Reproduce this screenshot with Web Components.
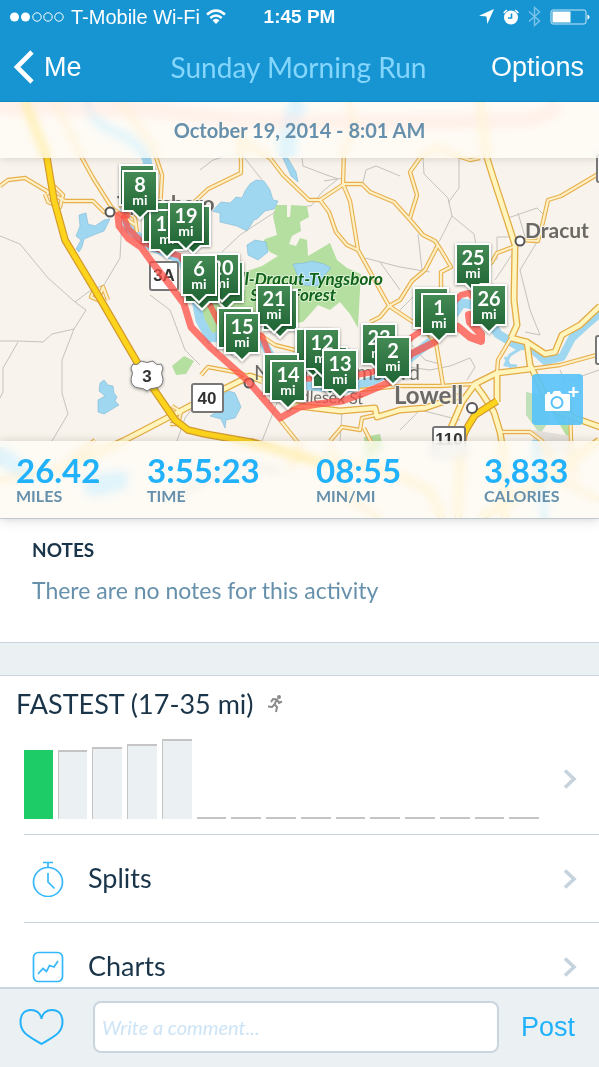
<!DOCTYPE html>
<html lang="en">
<head>
<meta charset="utf-8">
<meta name="viewport" content="width=device-width, initial-scale=1">
<title>Sunday Morning Run</title>
<style>
  html, body { height: 100%; margin: 0; }
  body {
    --brand: #1795d3;
    --accent: #21b2fb;
    --ink: #1a3549;
    --muted: #6690ab;
    --line: #c9d6df;
    --panel: #ebf0f3;
    --system: "Liberation Sans", Arial, sans-serif;
    font-family: Lato, "Open Sans", sans-serif;
    color: var(--ink);
    background: #fff;
  }
</style>
</head>
<body>
<activity-screen>
  <status-bar slot="top"></status-bar>
  <nav-bar slot="top">
    <span slot="back">Me</span>
    <span slot="title">Sunday Morning Run</span>
    <span slot="action">Options</span>
  </nav-bar>
  <run-map>
    <span slot="date">October 19, 2014 - 8:01 AM</span>
    <stat-item slot="stats"><span slot="value">26.42</span>MILES</stat-item>
    <stat-item slot="stats"><span slot="value">3:55:23</span>TIME</stat-item>
    <stat-item slot="stats"><span slot="value">08:55</span>MIN/MI</stat-item>
    <stat-item slot="stats"><span slot="value">3,833</span>CALORIES</stat-item>
  </run-map>
  <note-block><span slot="heading">NOTES</span>There are no notes for this activity</note-block>
  <fastest-chart values="69,69,72,75,80,0,0,0,0,0,0,0,0,0,0">FASTEST (17-35 mi)</fastest-chart>
  <menu-row icon="watch">Splits</menu-row>
  <menu-row icon="chart">Charts</menu-row>
  <comment-bar slot="bottom"></comment-bar>
</activity-screen>

<script>
const define = (name, html, setup) => {
  const template = document.createElement('template');
  template.innerHTML = html;
  customElements.define(name, class extends HTMLElement {
    constructor() {
      super();
      this.attachShadow({ mode: 'open' }).append(template.content.cloneNode(true));
    }
    connectedCallback() { if (setup) setup(this, this.shadowRoot); }
  });
};

const chevron = '<svg class="chev" width="14" height="20" viewBox="0 0 14 20" aria-hidden="true"><path d="M2 1.500 11 10 2 18.500" fill="none" stroke="#c6d2dc" stroke-width="3.600"/></svg>';

define('activity-screen', `
<style>
  :host { display: flex; flex-direction: column; height: 100vh; overflow: hidden; }
  header { background: var(--brand); border-bottom: 1px solid #1486c0; }
  main { flex: 1; min-height: 0; overflow-y: auto; scrollbar-width: none; }
</style>
<header><slot name="top"></slot></header>
<main><slot></slot></main>
<slot name="bottom"></slot>`);

define('status-bar', `
<style>
  :host { display: grid; grid-template-columns: 1fr auto 1fr; align-items: center; height: 33px;
    padding: 0 9px; color: #fff; font: 20px/24px var(--system); }
  div { display: flex; align-items: center; gap: 6px; }
  .icons { justify-content: flex-end; gap: 9px; }
  time { font-size: 19px; font-weight: 700; }
  svg { display: block; }
</style>
<div>
  <svg width="56" height="12" viewBox="0 0 56 12" fill="none" stroke="#fff"><circle cx="5.500" cy="6" r="4.500" fill="#fff" stroke="none"/><circle cx="16.500" cy="6" r="4.500" fill="#fff" stroke="none"/><circle cx="28" cy="6" r="4.200"/><circle cx="39" cy="6" r="4.200"/><circle cx="50" cy="6" r="4.200"/></svg>
  <span>T-Mobile Wi-Fi</span>
  <svg width="20" height="16" viewBox="0 0 20 16" fill="none" stroke="#fff" stroke-width="2.400"><path d="M1 5.500Q10-2.500 19 5.500M4.300 9Q10 4 15.700 9"/><path d="M6.500 11.300Q10 8.300 13.500 11.300L10 15Z" fill="#fff" stroke="none"/></svg>
</div>
<time datetime="13:45">1:45 PM</time>
<div class="icons">
  <svg width="15" height="15" viewBox="0 0 15 15" fill="#fff"><path d="M15 0 8.300 15 7.500 7.500 0 6.700Z"/></svg>
  <svg width="16" height="16" viewBox="0 0 16 16"><circle cx="8" cy="8.500" r="7" fill="#fff"/><path d="M8.500 4.500v4.500H5" fill="none" stroke="#1795d3" stroke-width="1.600"/><path d="M.700 4 3.800 1M15.300 4 12.200 1" stroke="#fff" stroke-width="1.600"/></svg>
  <svg width="13" height="21" viewBox="0 0 13 21" fill="none" stroke="#7dc3e8" stroke-width="1.400"><path d="M1 5.500 11.500 15 6.500 19.500V1.500L11.500 6 1 15.500"/></svg>
  <svg width="40" height="16" viewBox="0 0 40 16"><rect x="1" y="1" width="35" height="14" rx="2" fill="none" stroke="#cbe6f5"/><path d="M2.500 2.500h18v11h-18z" fill="#fff"/><path d="M37.500 5.500q2 .500 2 2.500t-2 2.500z" fill="#fff"/></svg>
</div>`);

define('nav-bar', `
<style>
  :host { display: grid; grid-template-columns: 1fr auto 1fr; align-items: center; height: 68px; padding: 0 15px 0 13px; }
  a, button { font: 27px/32px var(--system); color: #fff; text-decoration: none; background: none; border: 0; padding: 0; }
  a { display: flex; align-items: center; gap: 9px; }
  button { justify-self: end; }
  h1 { margin: 0; font-size: 28px; line-height: 32px; font-weight: 400; color: #84d6fd; }
</style>
<a href="#me"><svg width="22" height="34" viewBox="0 0 22 34" aria-hidden="true"><path d="M19 2 4 17 19 32" fill="none" stroke="#fff" stroke-width="4.600"/></svg><slot name="back"></slot></a>
<h1><slot name="title"></slot></h1>
<button type="button"><slot name="action"></slot></button>`);

define('stat-item', `
<style>
  :host { display: block; font-size: 16px; line-height: 18px; font-weight: 700; color: var(--muted); }
  b { display: block; font-size: 33px; line-height: 34px; font-weight: 700; color: var(--accent); }
</style>
<b><slot name="value"></slot></b><slot></slot>`);

/* Road polylines, drawn twice: casing first, then the lighter surface. */
const smallRoads = [
  '0,186 8,180 25,178 50,193 65,201 93,201 104,212 115,213', '55,102 82,158 93,178 112,208 135,225',
  '120,102 152,145 162,175 160,210', '241,130 241,173 208,189 190,206', '240,140 270,158 283,175 309,200 320,200 329,212 336,232 347,245 358,250',
  '320,200 344,184 362,184 370,192 394,202 412,222 423,235 435,241 441,250 451,267 441,272 441,290', '349,102 354,130 344,150 343,184 350,201 358,250 389,306 425,330 436,343 443,385',
  '440,145 420,158 410,172 417,195 410,218', '438,245 425,270 412,281 400,300 389,306', '420,156 440,148 455,155 470,160 480,158',
  '513,247 497,253 492,262 480,270', '520,240 538,241 543,222 548,200 561,196 600,173', '511,338 498,360 497,373',
  '497,373 530,369 560,365 600,354', '475,384 440,386 400,386 360,390', '500,432 530,432 542,441 560,480 599,500',
  '201,375 208,367 240,373 262,382', '280,420 300,445 290,470', '330,441 342,427 360,430 362,418 376,415', '370,322 380,317 389,306',
  '260,335 275,345 295,350', '375,450 364,428', '570,400 571,440 575,480', '95,287 91,297 98,300 103,287 108,300',
  '47,194 55,187 63,195 60,207 48,202 45,194', '172,406 181,412 178,424 170,424', '120,205 135,218 137,232', '330,445 350,500 380,518', '0,480 60,470 95,440'
];
const bigRoads = [
  '480,102 487,158 493,177 507,220 515,245 514,300 517,325 511,338', '511,338 527,342 545,354 555,352 562,335 580,325 600,306',
  '527,342 530,365 545,395 557,411 575,418 600,427', '530,369 497,373 475,384 462,402 450,430', '475,384 483,395 494,412 500,432 503,450 505,518',
  '497,373 497,402', '290,405 340,411 375,408 377,417 400,410 425,408 460,396', '60,470 123,441 150,427 192,405 250,376 262,380',
  '250,441 320,462 380,468 430,490 442,518', '465,430 460,460 458,518', '480,518 560,470 599,440'
];
const lanes = [
  '0,236 20,244 48,278 75,302 86,310 74,329 62,360 62,393 68,414 52,441', '0,341 18,341 43,342 52,334 74,329', '0,398 3,392 3,368 18,342',
  '75,302 91,290 104,285 120,258 122,216', '200,170 213,160 240,152 262,180', '302,158 303,166 324,174 338,179 323,191 311,206 307,206',
  '275,212 240,235 222,252', '324,181 343,178', '363,182 366,170 376,166 400,176', '423,158 424,174 448,198 452,216 440,240 434,248', '459,158 459,188 448,203',
  '452,216 474,234 477,250', '365,258 400,267 430,272', '380,262 400,290', '508,218 537,208 544,215', '518,213 526,240', '537,242 520,270 530,310', '519,237 497,237 497,260',
  '495,280 515,250', '400,310 420,290', '418,234 422,270', '530,310 540,335 525,332', '400,366 430,370 450,366 470,358 475,367 467,380', '412,345 425,360 440,364',
  '400,430 420,410 460,420', '560,370 565,382 599,370', '177,441 185,418 195,405', '262,441 271,418 278,400', '340,441 342,412', '150,295 170,310 185,350 200,365', '215,490 280,463 300,480'
];
const freeways = ['25,102 47,158 54,200 65,240 95,290 137,362 153,388 175,420 188,430 205,434 250,442 320,462', '497,401 475,415 467,428 458,445'];
const lines = (list, style) => `<g fill="none" stroke-linejoin="round" ${style}>${list.map(p => `<polyline points="${p}"/>`).join('')}</g>`;

/* Mile markers: centre x, top y, label (stacked markers behind carry none). */
const markers = [
  [137,164,''],[160,201,''],[193,205,''],[167,209,'17'],[140,170,'8'],[186,201,'19'],
  [226,261,''],[222,253,'20'],[202,261,''],[199,254,'6'],[280,289,''],[274,284,'21'],[235,307,''],[242,312,'15'],
  [330,346,''],[313,328,'2'],[322,328,'12'],[281,353,''],[288,360,'14'],[340,349,'13'],
  [379,323,'23'],[393,336,'2'],[473,243,'25'],[431,287,'2'],[489,284,'26'],[439,293,'1']
];
const marker = ([x, y, label]) => `<g transform="translate(${x} ${y})">
  <path filter="url(#drop)" d="M-18 0H18V42H8L0 50-8 42H-18Z" fill="#fff"/><path d="M-16 2H16V40H7L0 47-7 40H-16Z" fill="url(#pin)"/>
  ${label && `<text y="22" font-size="20">${label}</text><text y="35" font-size="14">mi</text>`}</g>`;

const mapArt = `
<svg class="map" viewBox="0 102 599 416" preserveAspectRatio="xMidYMid slice" role="img" aria-label="Route map">
  <defs>
    <linearGradient id="pin" x1="0" y1="0" x2="0" y2="1"><stop stop-color="#448a54"/><stop offset="1" stop-color="#1f6434"/></linearGradient>
    <filter id="drop" x="-30%" y="-30%" width="160%" height="160%"><feDropShadow dx="0" dy="1" stdDeviation="1.500" flood-opacity=".4"/></filter>
  </defs>
  <path fill="#f8f3ec" d="M0 102H599V518H0Z"/>
  <path fill="#b5dfa0" d="M276 205H287V217H290L291 205 307 206 309 217 300 222 301 231 292 236 289 244 296 246 300 238 307 240 308 256 330 243 337 260 347 268 361 274 360 290 358 328 350 314 340 302 330 310 318 305 303 322 280 325 240 320 222 335 216 337 205 332 198 310 215 290 245 290 245 272 262 266 278 256 270 252 262 244 265 239 277 235 273 216Z"/>
  <path fill="#b5dfa0" d="M172 366 184 356 194 361 186 374 176 375ZM364 437 380 434 383 448 366 460ZM368 440 378 436 378 452 366 452ZM543 400 560 410 573 432 570 442 560 425Z"/>
  <path fill="#bfe0b9" d="M526 392 545 396 550 420 540 434 526 415Z"/><path fill="#e3dfda" d="M533 430 570 436V455H533Z"/>
  <g fill="#9fd7f1" stroke="#7fb8d6" stroke-width=".600">
    <path d="M79 215 86 213 88 224 95 226 104 220 110 219 104 231 96 234 84 239 82 247 79 252 76 249 81 240 76 236 80 226Z"/>
    <path d="M212 211 221 202 230 203 236 197 242 198 245 191 250 184 256 180 264 181 270 190 273 200 278 201 274 209 265 211 257 219 254 220 247 231 237 226 220 222 220 213Z"/>
    <path d="M283 150 296 172 298 182 291 176 283 158Z"/><path d="M247 245 255 240 266 242 268 252 258 260 248 255Z"/>
    <path d="M293 264 304 263 312 261 324 264 331 268 322 278 318 286 300 285 297 274Z"/>
    <path d="M100 383 104 380 108 385 113 386 114 393 117 397 115 401 119 405 104 414 98 412 98 400 105 396 99 391Z"/>
    <path d="M223 389 235 393 241 407 235 418 226 420 225 428 221 419 210 416 220 410Z"/>
    <path d="M0 447 12 452 35 475 28 482 0 465ZM85 478 110 472 128 472 126 488 98 496 85 493Z"/>
  </g>
  <g fill="none" stroke="#9fd7f1" stroke-linejoin="round">
    <path stroke-width="9" d="M85 102Q95 125 115 132 140 142 147 160L150 178Q140 195 124 210L128 228 148 245 182 260 194 290 200 320 212 342"/>
    <path stroke-width="9" d="M212 338 225 335M262 340 270 355 285 380 310 386 345 389 375 380 410 358 440 334 462 303 480 306 498 334 518 346 528 345"/>
    <path stroke-width="18" d="M300 102Q285 125 288 156"/><path stroke-width="8" d="M528 345 545 361 562 357 572 338 585 326 600 313"/>
    <path stroke-width="3" d="M528 344 510 355 505 365 517 366M505 357 511 368"/><path stroke-width="7" d="M535 440 545 518"/>
  </g>
  ${lines(lanes, 'stroke="#c5c3bd" stroke-width="1"')}
  <path d="M0 108Q130 106 200 116T520 120Q550 118 558 104" fill="none" stroke="#ffa193" stroke-width="15" opacity=".4"/>
  ${lines(smallRoads, 'stroke="#e8b04d" stroke-width="4.400"')}
  ${lines(bigRoads, 'stroke="#e3ab45" stroke-width="7"')}
  ${lines(smallRoads, 'stroke="#fdefc6" stroke-width="2.200"')}
  ${lines(bigRoads, 'stroke="#fff5bd" stroke-width="4.400"')}
  ${lines(freeways, 'stroke="#d39a2c" stroke-width="7.600"')}
  ${lines(freeways, 'stroke="#fdd41c" stroke-width="5.200"')}
  <path d="M180 495 205 480 245 463 280 473" fill="none" stroke="#cfc9c2" stroke-width="5"/>
  <g class="place"><text x="117" y="211" font-size="21">Tyngsboro</text><text x="525" y="238" font-size="21">Dracut</text><text x="394" y="404" font-size="24">Lowell</text></g>
  <g class="town"><text x="254" y="380" font-size="21">North Chelmsford</text><text transform="translate(273 401) rotate(2)" font-size="16">Middlesex St</text></g>
  <g class="park"><text x="383" y="285" text-anchor="end">Lowell-Dracut-Tyngsboro</text><text x="336" y="301" text-anchor="end">State Forest</text></g>
  <g fill="#fff" stroke="#777" stroke-width="2">
    <rect x="150" y="262" width="28" height="28" rx="2"/><rect x="192" y="384" width="31" height="28" rx="2"/><rect x="433" y="427" width="32" height="28" rx="2"/>
    <rect x="597" y="155" width="20" height="27" rx="2"/><rect x="596" y="336" width="20" height="28" rx="2"/>
    <path stroke-width="1" filter="url(#drop)" d="M133 364Q138 366 141 361 147 364 153 361 156 366 161 364L163 368Q160 373 163 379 163 387 155 388 150 388 147 391 144 388 139 388 131 387 131 379 134 373 131 368Z"/>
  </g>
  <g class="shield"><text x="164" y="281">3A</text><text x="207" y="404">40</text><text x="147" y="382" font-size="20">3</text><text x="449" y="445">110</text></g>
  <g fill="#fff" stroke="#555" stroke-width="2"><circle cx="110" cy="212" r="4.500"/><circle cx="520" cy="241" r="4.500"/><circle cx="472" cy="408" r="5"/><circle cx="249" cy="383" r="4.500" fill="none"/></g>
  <g fill="none" stroke="#ff4d43" stroke-opacity=".74" stroke-linejoin="round" stroke-linecap="round">
    <path stroke-width="7" d="M127 215H118L119 226 128 238 141 247 151 261 170 285 184 304 191 327 211 348 248 381 280 418 300 407 318 404 342 401 362 394 390 382 411 354 435 342"/>
    <path stroke-width="6" d="M124 217 128 228 141 241 160 250 180 256 195 280 211 307 220 325 240 325 262 336 268 352 272 365 300 379 345 377 373 372 395 355 412 337 430 325 445 310 461 295 469 293 473 298"/>
    <path stroke-width="8" d="M458 327 470 337 481 341 481 334 470 322 469 315"/>
  </g>
  <g class="pins">${markers.map(marker).join('')}</g>
</svg>`;

define('run-map', `
<style>
  :host { display: grid; grid-template: 56px 1fr 77px / 100%; height: 416px; border-bottom: 1px solid var(--line);
    position: relative; box-shadow: 0 4px 12px #1a35490f; }
  .map { grid-area: 1 / 1 / 4 / 2; width: 100%; height: 416px; display: block; }
  .band { background: #fffdfaba; backdrop-filter: blur(4px) saturate(1.400); box-shadow: 0 0 8px #6d605040; }
  .date { grid-area: 1 / 1; display: flex; align-items: center; justify-content: center; font-size: 20px; line-height: 24px; font-weight: 700; color: var(--muted); }
  .stats { grid-area: 3 / 1; display: grid; grid-template-columns: 131fr 169fr 168fr 99fr; padding: 12px 16px; box-sizing: border-box; }
  button { grid-area: 2 / 1; align-self: end; justify-self: end; margin: 0 16px 16px 0; width: 51px; height: 51px; padding: 0; border: 0; border-radius: 4px; background: #58c2f8e8; }
  button svg { display: block; }
  .pins text { fill: #fff; font-weight: 700; text-anchor: middle; }
  .place text { fill: #6b6965; font-weight: 700; stroke: #f8f3ec; stroke-width: 2px; paint-order: stroke; }
  .town text { fill: #6b6965; }
  .park text { fill: #0f6318; font: italic 700 17px Lato, sans-serif; stroke: #ffffff80; stroke-width: 2px; paint-order: stroke; }
  .shield text { fill: #333; font-family: var(--system); font-size: 17px; font-weight: 700; text-anchor: middle; }
</style>
${mapArt}
<div class="band date"><slot name="date"></slot></div>
<button type="button" aria-label="Add photo"><svg width="51" height="51" viewBox="0 0 51 51"><path fill="#fff" d="M14 20h6l2-3h6l2 3h7q1 0 1 1v15q0 1-1 1H14q-1 0-1-1V21q0-1 1-1Z"/><path fill="#fff" d="M15 18h3v3h-3z"/><circle cx="25" cy="28.500" r="5.500" fill="#fff" stroke="#58c2f8" stroke-width="2"/><path d="M41.500 13v10M36.500 18h10" stroke="#fff" stroke-width="2.200"/></svg></button>
<div class="band stats"><slot name="stats"></slot></div>`);

define('note-block', `
<style>
  :host { display: block; padding: 19px 32px 36px; border-bottom: 1px solid var(--line); }
  h2 { margin: 0 0 12px; font-size: 19px; line-height: 24px; font-weight: 700; }
  p { margin: 0; font-size: 23px; line-height: 32px; color: var(--muted); }
</style>
<h2><slot name="heading"></slot></h2><p><slot></slot></p>`);

define('fastest-chart', `
<style>
  :host { display: block; border-top: 32px solid var(--panel); }
  section { border-top: 1px solid var(--line); padding: 11px 0 0 16px; }
  h2 { margin: 0; display: flex; align-items: center; gap: 14px; font-size: 27px; line-height: 34px; font-weight: 400; }
  a { display: flex; align-items: center; gap: 24px; margin-left: 8px; padding: 18px 22px 15px 0; border-bottom: 1px solid var(--line); }
  .bars { flex: 1; display: flex; align-items: flex-end; gap: 5px; height: 80px; }
  .bars i { flex: 1; box-sizing: border-box; border: solid #c4c4c4; border-width: 2px 0 0 1px; background: var(--panel); }
  .bars i:first-child { background: #1dcc66; border: 0; }
</style>
<section>
  <h2><slot></slot><svg width="15" height="18" viewBox="0 0 15 18" fill="none" stroke="#8b8b8b" stroke-width="2" aria-hidden="true"><circle cx="11" cy="2" r="1" fill="#8b8b8b"/><path d="M3 7 5 4 9 4.500 11 8 14 6.500M8.500 5 6.500 9.500 9 12 8 17M6.500 9.500 4 12 0 11.500"/></svg></h2>
  <a href="#fastest" aria-label="Fastest runs"><div class="bars"></div>${chevron}</a>
</section>`, (host, root) => {
  root.querySelector('.bars').innerHTML = host.getAttribute('values').split(',')
    .map(v => `<i style="height:${Math.max(v, 2)}px"></i>`).join('');
});

const rowIcons = {
  watch: '<circle cx="16" cy="21" r="14.500"/><path d="M16 6V1.500M11 1.500H21M16 12V21L22.500 27.500"/>',
  chart: '<rect x="1.500" y="3.500" width="29" height="29" rx="5"/><path d="M6 25 11 19.500 14.500 22.500 17.500 16.500 22 18 26 12"/>'
};
define('menu-row', `
<style>
  :host { display: block; padding-left: 24px; }
  a { display: flex; align-items: center; height: 87px; padding: 0 22px 0 8px; border-bottom: 1px solid var(--line);
    color: inherit; text-decoration: none; font-size: 27px; line-height: 32px; }
  span { flex: 1; margin-left: 24px; padding-bottom: 2px; }
</style>
<a href="#details"><svg class="icon" width="32" height="36" viewBox="0 0 32 36" fill="none" stroke="#35b8fb" stroke-width="1.700" aria-hidden="true"></svg><span><slot></slot></span>${chevron}</a>`,
(host, root) => { root.querySelector('.icon').innerHTML = rowIcons[host.getAttribute('icon')]; });

define('comment-bar', `
<style>
  :host { display: block; background: var(--panel); border-top: 2px solid #c9d6df; }
  form { display: flex; align-items: center; gap: 22px; padding: 12px 24px 14px 19px; }
  button { padding: 0; border: 0; background: none; color: var(--accent); font: 27px/32px var(--system); }
  svg { display: block; }
  .like { margin-right: 7px; }
  input { flex: 1; min-width: 0; height: 52px; box-sizing: border-box; border: 2px solid #c9d6df; border-radius: 8px; background: #fff;
    padding: 0 7px; font: italic 20px/24px Lato, sans-serif; color: var(--ink); }
  input::placeholder { color: #cde4f6; opacity: 1; }
</style>
<form>
  <button class="like" type="button" aria-label="Like"><svg width="45" height="38" viewBox="0 0 45 38"><path d="M22.500 11C22 5 17 2 12 2 5 2 1.500 7 1.500 14 1.500 26 12 29 22.500 36 33 29 43.500 26 43.500 14 43.500 7 40 2 33 2 28 2 23 5 22.500 11Z" fill="none" stroke="#21b2fb" stroke-width="2"/></svg></button>
  <input type="text" aria-label="Comment" placeholder="Write a comment...">
  <button type="submit">Post</button>
</form>`);
</script>
</body>
</html>
